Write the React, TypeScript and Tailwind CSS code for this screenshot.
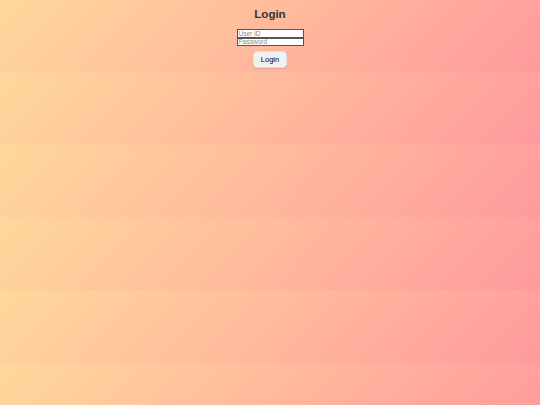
import React from 'react';

export default function App() {
  return (
    <div className="min-h-screen bg-[linear-gradient(135deg,#ffd89b,#ff9a9e)] bg-[length:100%_72.5px] bg-repeat font-['Liberation_Sans',Arial,sans-serif]">
      <div className="flex flex-col items-center pt-[6.5px] pb-[5px]">
        <h1 className="text-[11.5px] leading-[15px] font-bold text-[#333]">Login</h1>
        <div className="mt-[7.5px] flex flex-col">
          <input
            type="text"
            placeholder="User ID"
            className="w-[67px] h-[8.5px] border-[0.75px] border-[#555] bg-white px-[1px] text-[6.5px] leading-none text-[#333] placeholder:text-[#888] outline-none"
          />
          <input
            type="password"
            placeholder="Password"
            className="w-[67px] h-[8.5px] border-[0.75px] border-[#555] bg-white px-[1px] text-[6.5px] leading-none text-[#333] placeholder:text-[#888] outline-none"
          />
        </div>
        <button className="mt-[4.5px] w-[33.5px] h-[17.5px] rounded-[4px] bg-[#f1f1f1] border-[0.5px] border-[#e0e0e0] shadow-[0_0.5px_1px_rgba(0,0,0,0.12)] text-[7.5px] text-black">
          Login
        </button>
      </div>
    </div>
  );
}
